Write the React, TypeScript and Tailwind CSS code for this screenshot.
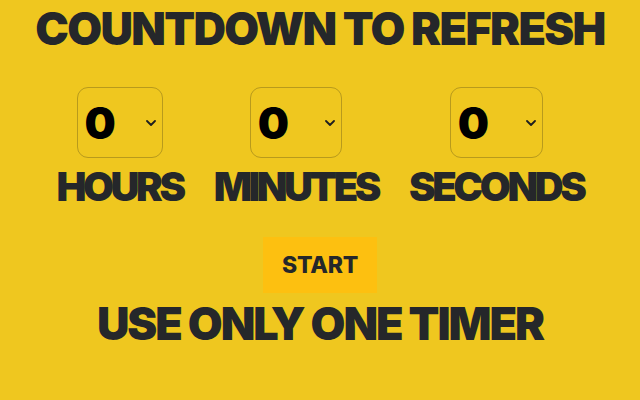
import React from 'react';

const units = [
  { label: 'HOURS', box: 'w-[86px]' },
  { label: 'MINUTES', box: 'w-[92px]' },
  { label: 'SECONDS', box: 'w-[93px]' },
];

const Chevron = () => (
  <svg viewBox="0 0 10 6" className="h-[6px] w-[10px]" fill="none" stroke="#1f1f1f" strokeWidth={1.8} strokeLinecap="round" strokeLinejoin="round">
    <path d="M1 1l4 4 4-4" />
  </svg>
);

export default function App() {
  return (
    <div className="h-[400px] w-[640px] overflow-hidden bg-[#efc71f] font-['Inter',sans-serif] text-[#25272a]">
      <div className="flex flex-col items-center">
        <h1 className="mt-[6px] text-[45px] font-black leading-none tracking-[-0.037em]">COUNTDOWN TO REFRESH</h1>

        <div className="mt-[36px] flex gap-[31px]">
          {units.map((u) => (
            <div key={u.label} className="flex flex-col items-center">
              <div className={`flex h-[71px] ${u.box} items-center justify-between rounded-[11px] border border-[#b89a1c] pl-[7px] pr-[6px]`}>
                <span className="text-[44px] font-black leading-none text-black">0</span>
                <Chevron />
              </div>
              <div className="mt-[9px] text-[40px] font-black leading-none tracking-[-0.085em]">{u.label}</div>
            </div>
          ))}
        </div>

        <button className="mt-[30px] flex h-[56px] w-[114px] items-center justify-center bg-[#fdc010] text-[23px] font-extrabold leading-none tracking-[-0.01em]">
          START
        </button>

        <div className="mt-[8px] text-[45px] font-black leading-none tracking-[-0.045em]">USE ONLY ONE TIMER</div>
      </div>
    </div>
  );
}
